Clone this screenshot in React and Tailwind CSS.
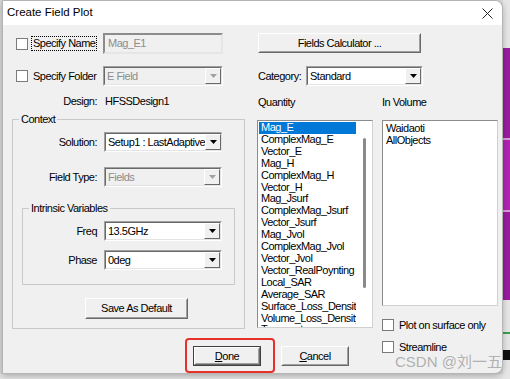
import React from 'react';

const quantities = [
  'Mag_E',
  'ComplexMag_E',
  'Vector_E',
  'Mag_H',
  'ComplexMag_H',
  'Vector_H',
  'Mag_Jsurf',
  'ComplexMag_Jsurf',
  'Vector_Jsurf',
  'Mag_Jvol',
  'ComplexMag_Jvol',
  'Vector_Jvol',
  'Vector_RealPoynting',
  'Local_SAR',
  'Average_SAR',
  'Surface_Loss_Density',
  'Volume_Loss_Density',
  'Temperature',
];

const volumes = ['Waidaoti', 'AllObjects'];

const Checkbox = ({ className = '' }) => (
  <span className={`${className} block w-[12px] h-[12px] shrink-0 border border-[#7a7a7a] bg-white`} />
);

const Arrow = ({ disabled }) => (
  <svg width="7" height="4" viewBox="0 0 7 4">
    <path d="M0 0h7L3.5 4z" fill={disabled ? '#a0a0a0' : '#000'} />
  </svg>
);

// sunken combo box, win classic look
const Combo = ({ value, disabled, width = 'w-[118px]', height = 'h-[20px]' }) => (
  <div className={`${width} ${height} shrink-0 flex border border-t-[#a0a0a0] border-l-[#a0a0a0] border-r-white border-b-white`}>
    <div className={`flex-1 flex border border-t-[#696969] border-l-[#696969] border-r-[#e3e3e3] border-b-[#e3e3e3] ${disabled ? 'bg-[#f0f0f0]' : 'bg-white'}`}>
      <span className={`flex-1 flex items-center pl-[2px] whitespace-nowrap overflow-hidden ${disabled ? 'text-[#8c8c8c]' : 'text-black'}`}>
        {value}
      </span>
      <span className="w-[16px] shrink-0 flex items-center justify-center bg-[#f0f0f0] border border-t-white border-l-white border-r-[#696969] border-b-[#696969]">
        <Arrow disabled={disabled} />
      </span>
    </div>
  </div>
);

const Button = ({ children, className = '', isDefault }) => (
  <div className={`${className} flex ${isDefault ? 'border border-[#404040]' : ''}`}>
    <div className="flex-1 flex border border-t-white border-l-white border-r-[#696969] border-b-[#696969]">
      <div className="flex-1 flex items-center justify-center whitespace-nowrap bg-[#f0f0f0] border border-t-[#f0f0f0] border-l-[#f0f0f0] border-r-[#a0a0a0] border-b-[#a0a0a0]">
        {children}
      </div>
    </div>
  </div>
);

const Group = ({ label, className = '', children }) => (
  <div className={`${className} flex flex-col border border-[#c9c9c9]`}>
    <span className="-mt-[8px] ml-[6px] self-start px-[2px] bg-[#f0f0f0] leading-[14px] whitespace-nowrap">{label}</span>
    {children}
  </div>
);

export default function App() {
  return (
    <div className="w-[510px] h-[379px] flex bg-[#d8d8d8] overflow-hidden font-['Liberation_Sans',sans-serif] text-[11px] tracking-[-0.5px] text-black">
      <div className="flex flex-col">
        {/* dialog */}
        <div className="relative ml-[2px] w-[501px] h-[374px] flex flex-col bg-[#f0f0f0] border border-[#b4b4b4] rounded-r-[8px] overflow-hidden shadow-[0_2px_6px_rgba(0,0,0,0.25)]">
          {/* title bar */}
          <div className="h-[24px] shrink-0 flex items-center justify-between bg-white pl-[4px] pr-[9px] text-[11.5px] tracking-normal">
            <span>Create Field Plot</span>
            <svg width="11" height="11" viewBox="0 0 11 11">
              <path d="M0.5 0.5l10 10M10.5 0.5l-10 10" stroke="#222" strokeWidth="1" />
            </svg>
          </div>

          <div className="flex-1 flex flex-col pl-[9px]">
            {/* top rows */}
            <div className="h-[84px] flex">
              <div className="w-[233px] flex flex-col">
                <div className="mt-[8px] h-[21px] flex items-center">
                  <Checkbox className="ml-[4px]" />
                  <span className="ml-[3px] border border-dotted border-black px-[1px] leading-[13px] whitespace-nowrap">Specify Name</span>
                  <div className="ml-auto mr-[22px] w-[120px] h-[21px] flex items-center pl-[3px] bg-[#f0f0f0] border-2 border-t-[#8c8c8c] border-l-[#8c8c8c] border-r-[#e6e6e6] border-b-[#e6e6e6] text-[#8c8c8c]">
                    Mag_E1
                  </div>
                </div>
                <div className="mt-[12px] h-[20px] flex items-center">
                  <Checkbox className="ml-[4px]" />
                  <span className="ml-[5px] whitespace-nowrap">Specify Folder</span>
                  <span className="ml-auto mr-[22px]"><Combo value="E Field" disabled width="w-[120px]" /></span>
                </div>
                <div className="mt-[8px] h-[14px] flex items-center">
                  <span className="w-[85px] text-right">Design:</span>
                  <span className="ml-[8px]">HFSSDesign1</span>
                </div>
              </div>

              <div className="ml-[12px] flex flex-col">
                <Button className="mt-[8px] ml-[1px] w-[163px] h-[20px]">Fields Calculator ...</Button>
                <div className="mt-[13px] h-[20px] flex items-center">
                  <span className="ml-[1px] w-[48px] whitespace-nowrap">Category:</span>
                  <Combo value="Standard" width="w-[117px]" />
                </div>
                <div className="mt-[9px] h-[14px] flex items-center">
                  <span className="ml-[1px] w-[124px]">Quantity</span>
                  <span>In Volume</span>
                </div>
              </div>
            </div>

            {/* lists + context */}
            <div className="flex">
              <div className="flex flex-col">
                <div className="flex">
                  <Group label="Context" className="mt-[10px] w-[233px] h-[210px]">
                    <div className="mt-[6px] h-[20px] flex items-center">
                      <span className="w-[84px] text-right">Solution:</span>
                      <span className="ml-[7px]"><Combo value="Setup1 : LastAdaptive" /></span>
                    </div>
                    <div className="mt-[15px] h-[20px] flex items-center">
                      <span className="w-[84px] text-right">Field Type:</span>
                      <span className="ml-[7px]"><Combo value="Fields" disabled /></span>
                    </div>
                    <Group label="Intrinsic Variables" className="mt-[21px] ml-[9px] w-[213px] h-[77px]">
                      <div className="mt-[6px] h-[20px] flex items-center">
                        <span className="w-[74px] text-right">Freq</span>
                        <span className="ml-[7px]"><Combo value="13.5GHz" /></span>
                      </div>
                      <div className="mt-[9px] h-[20px] flex items-center">
                        <span className="w-[74px] text-right">Phase</span>
                        <span className="ml-[7px]"><Combo value="0deg" /></span>
                      </div>
                    </Group>
                    <Button className="mt-[13px] ml-[72px] w-[103px] h-[21px]">Save As Default</Button>
                  </Group>

                  {/* quantity list */}
                  <div className="ml-[12px] mt-[11px] w-[116px] h-[208px] flex border border-t-[#8c8c8c] border-l-[#8c8c8c] border-r-[#d0d0d0] border-b-[#d0d0d0] bg-white overflow-hidden">
                    <div className="w-[98px] shrink-0 flex flex-col pt-[1px] pl-[1px] leading-[11.9px] overflow-hidden">
                      {quantities.map((q, i) => (
                        <span key={q} className={`pl-[2px] whitespace-nowrap ${i === 0 ? 'bg-[#0078d7] text-white' : ''}`}>
                          {q}
                        </span>
                      ))}
                    </div>
                    <div className="flex-1 flex justify-center bg-white">
                      <div className="mt-[17px] w-[3px] h-[150px] rounded-[2px] bg-[#8a8a8a]" />
                    </div>
                  </div>
                </div>

                {/* bottom buttons */}
                <div className="flex items-start">
                  <div className="mt-[9px] ml-[173px] border-2 border-[#e8302a] rounded-[4px] pl-[6px] pt-[6px] pr-[12px] pb-[5px]">
                    <Button isDefault className="w-[68px] h-[20px]"><span className="underline">D</span>one</Button>
                  </div>
                  <Button className="mt-[17px] ml-[6px] w-[68px] h-[20px]"><span className="underline">C</span>ancel</Button>
                </div>
              </div>

              {/* in volume */}
              <div className="ml-[9px] flex flex-col">
                <div className="mt-[11px] w-[116px] h-[186px] flex flex-col pt-[1px] pl-[3px] leading-[12px] border border-t-[#8c8c8c] border-l-[#8c8c8c] border-r-[#d0d0d0] border-b-[#d0d0d0] bg-white">
                  {volumes.map((v) => (
                    <span key={v}>{v}</span>
                  ))}
                </div>
                <div className="mt-[13px] h-[12px] flex items-center">
                  <Checkbox />
                  <span className="ml-[5px] whitespace-nowrap">Plot on surface only</span>
                </div>
                <div className="mt-[10px] h-[12px] flex items-center">
                  <Checkbox />
                  <span className="ml-[5px]">Streamline</span>
                </div>
              </div>
            </div>
          </div>

          {/* watermark */}
          <span className="absolute left-[392px] top-[352px] font-['Liberation_Sans','Noto_Sans_CJK_SC',sans-serif] text-[15px] leading-[18px] tracking-normal text-[#a8a8a8]/90">
            CSDN @刘一五
          </span>
        </div>
        <div className="flex-1 bg-[#e4e4e4]" />
      </div>

      {/* window behind, right edge */}
      <div className="flex-1 flex flex-col bg-[#e6e6e6]">
        <div className="h-[48px]" />
        <div className="h-[90px] bg-[#9a1c9f]" />
        <div className="h-[2px] bg-[#d8a0d8]" />
        <div className="h-[70px] bg-[#b223b5]" />
        <div className="h-[2px] bg-[#d8a0d8]" />
        <div className="h-[88px] bg-[#9a1c9f]" />
        <div className="h-[32px]" />
        <div className="h-[2px] bg-[#3aa04a]" />
        <div className="h-[16px]" />
        <div className="h-[10px] bg-[#111]" />
      </div>
    </div>
  );
}
